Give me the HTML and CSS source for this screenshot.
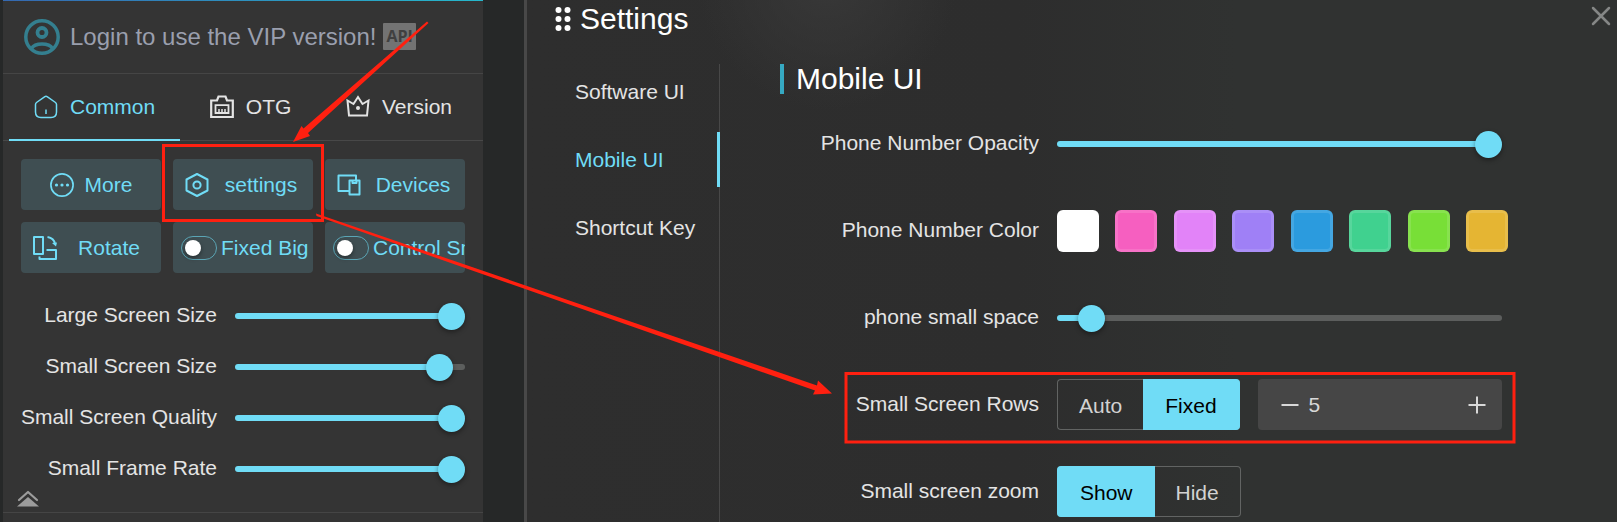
FILE: index.html
```html
<!DOCTYPE html>
<html lang="en">
<head>
<meta charset="utf-8">
<title>Settings</title>
<link rel="stylesheet" href="styles.css">
</head>
<body>
<div class="app">
  <aside class="sidebar">
    <header class="account">
      <svg class="avatar" viewBox="0 0 36 36" fill="none" stroke="currentColor" stroke-width="3.500"><circle cx="18" cy="18" r="16.200"/><circle cx="18" cy="13.500" r="4.500" stroke-width="3.800"/><path d="M7.500 29.500C11 23.500 25 23.500 28.500 29.500"/></svg>
      <a class="login" href="#">Login to use the VIP version!</a>
      <span class="badge">API</span>
    </header>
    <nav class="tabs">
      <button class="tab tab-active"><svg class="icon" viewBox="0 0 24 24" fill="none" stroke="currentColor" stroke-width="1.500"><path d="M2.500 7.500 10.500 1.800q1.500-1 3 0L21.500 7.500q1 .8 1 2V17q0 5.500-5.500 5.500H7q-5.500 0-5.500-5.500V9.500q0-1.200 1-2zM12 14.500v4.500"/></svg>Common</button>
      <button class="tab"><svg class="icon" viewBox="0 0 24 24" fill="none" stroke="currentColor" stroke-width="2.200"><path d="M1.200 5.500H7L8.500 1.500h7L17 5.500h5.800V22H1.200z"/><path d="M5.500 10.200h13V18h-13z" stroke-width="1.800"/><path d="M9 14v3.500M12 14v3.500M15 14v3.500" stroke-width="1.500"/></svg>OTG</button>
      <button class="tab"><svg class="icon" viewBox="0 0 24 24" fill="none" stroke="currentColor" stroke-width="2"><path d="M3 20.500 1.500 5.500 7.500 9 12 2l4.500 7 6-3.500L21 20.500z"/><circle cx="12" cy="13" r="2" fill="currentColor" stroke="none"/></svg>Version</button>
    </nav>
    <section class="tools">
      <button class="tool tool-center"><svg class="icon" viewBox="0 0 24 24" fill="none" stroke="currentColor" stroke-width="1.700"><circle cx="12" cy="12" r="11.100"/><g fill="currentColor" stroke="none"><circle cx="6.500" cy="12" r="1.600"/><circle cx="12" cy="12" r="1.600"/><circle cx="17.500" cy="12" r="1.600"/></g></svg><span>More</span></button>
      <button class="tool"><svg class="icon" viewBox="0 0 24 24" fill="none" stroke="currentColor" stroke-width="2"><path d="M12 1 22.500 6.500v11L12 23 1.500 17.500v-11z" stroke-linejoin="round"/><circle cx="12" cy="12" r="3.600"/></svg><span class="tool-text">settings</span></button>
      <button class="tool"><svg class="icon" viewBox="0 0 24 24" fill="none" stroke="currentColor" stroke-width="2" stroke-linejoin="round"><path d="M12.500 18H1.500V2.500h17.500V7M12.500 7.500h10v14h-10zM15.500 7.500V10h4V7.500"/></svg><span class="tool-text">Devices</span></button>
      <button class="tool"><svg class="icon" viewBox="0 0 24 24" fill="none" stroke="currentColor" stroke-width="2" stroke-linejoin="round"><path d="M1 1H10v17H1zM13.500 14H23v9H6.500v-2.500M14.500 1Q21 2 22 8"/><path d="m19 7 5-.5-1 4z" fill="currentColor" stroke="none"/></svg><span class="tool-text">Rotate</span></button>
      <label class="tool tool-switch"><input class="switch" type="checkbox"><span>Fixed Big</span></label>
      <label class="tool tool-switch"><input class="switch" type="checkbox"><span>Control Small</span></label>
    </section>
    <section class="sliders">
      <label class="label" for="s1">Large Screen Size</label><input class="range" id="s1" type="range" value="100" style="--fill:95%">
      <label class="label" for="s2">Small Screen Size</label><input class="range" id="s2" type="range" value="94" style="--fill:90%">
      <label class="label" for="s3">Small Screen Quality</label><input class="range" id="s3" type="range" value="100" style="--fill:95%">
      <label class="label" for="s4">Small Frame Rate</label><input class="range" id="s4" type="range" value="100" style="--fill:95%">
    </section>
    <button class="collapse" aria-label="Collapse"><svg viewBox="0 0 22 18" width="22" height="18"><path d="M2 10 11 2l9 8" fill="none" stroke="currentColor" stroke-width="2.200" stroke-linecap="round" stroke-linejoin="round"/><path d="M11 7 22 16.500H0z" fill="currentColor"/></svg></button>
    <div class="sidebar-foot"></div>
  </aside>

  <main class="panel">
    <header class="panel-head">
      <svg class="dots" viewBox="0 0 16 26" fill="currentColor"><circle cx="3.500" cy="4" r="3"/><circle cx="12.500" cy="4" r="3"/><circle cx="3.500" cy="13" r="3"/><circle cx="12.500" cy="13" r="3"/><circle cx="3.500" cy="22" r="3"/><circle cx="12.500" cy="22" r="3"/></svg>
      <h1 class="title">Settings</h1>
      <button class="close" aria-label="Close"><svg viewBox="0 0 20 20" width="20" height="20"><path d="M2 2l16 16M18 2 2 18" stroke="currentColor" stroke-width="2.500" stroke-linecap="round"/></svg></button>
    </header>
    <div class="panel-body">
      <nav class="menu">
        <a class="menu-item" href="#">Software UI</a>
        <a class="menu-item menu-active" href="#">Mobile UI</a>
        <a class="menu-item" href="#">Shortcut Key</a>
      </nav>
      <section class="content">
        <h2 class="heading">Mobile UI</h2>
        <div class="rows">
          <label class="label" for="opacity">Phone Number Opacity</label>
          <input class="range" id="opacity" type="range" value="100" style="--fill:98%">
          <span class="label">Phone Number Color</span>
          <div class="swatches">
            <button class="swatch white" aria-label="White"></button>
            <button class="swatch pink" aria-label="Pink"></button>
            <button class="swatch orchid" aria-label="Orchid"></button>
            <button class="swatch purple" aria-label="Purple"></button>
            <button class="swatch blue" aria-label="Blue"></button>
            <button class="swatch green" aria-label="Green"></button>
            <button class="swatch lime" aria-label="Lime"></button>
            <button class="swatch gold" aria-label="Gold"></button>
          </div>
          <label class="label" for="space">phone small space</label>
          <input class="range" id="space" type="range" value="5" style="--fill:7%">
          <label class="label" for="count">Small Screen Rows</label>
          <div class="control">
            <div class="segment"><button class="option">Auto</button><button class="option option-on">Fixed</button></div>
            <div class="stepper">
              <button class="step" aria-label="Decrease"><svg viewBox="0 0 18 18" width="18" height="18"><path d="M0.500 9h17" stroke="currentColor" stroke-width="2"/></svg></button>
              <input class="count" id="count" type="text" value="5">
              <button class="step" aria-label="Increase"><svg viewBox="0 0 18 18" width="18" height="18"><path d="M0.500 9h17M9 .5v17" stroke="currentColor" stroke-width="2"/></svg></button>
            </div>
          </div>
          <span class="label">Small screen zoom</span>
          <div class="control">
            <div class="segment"><button class="option option-on">Show</button><button class="option">Hide</button></div>
          </div>
        </div>
      </section>
    </div>
  </main>
</div>
<svg class="marks" width="1617" height="522" viewBox="0 0 1617 522" fill="none" stroke="#ff2010" stroke-width="3">
  <rect x="163.500" y="145.500" width="159" height="75"/>
  <rect x="846" y="373.500" width="668" height="68.500"/>
  <g fill="#ff2010" stroke="none">
    <path d="M427 21.500 428.500 23 308 133 310 136 293 142 301.500 126 303.500 128.500z"/>
    <path d="M316 213.500 316.500 216 815 390.500 813 394.500 832 393.500 818 380.500 817 385.500z"/>
  </g>
</svg>
</body>
</html>
```
FILE: styles.css
```css
* { box-sizing: border-box; }
body {
  margin: 0;
  background: #262828;
  color: #e4e4e4;
  font: 21px/24px "Liberation Sans", Arial, sans-serif;
  overflow: hidden;
}
button { border: 0; padding: 0; background: none; color: inherit; font: inherit; cursor: pointer; }
a { color: inherit; text-decoration: none; }
svg { display: block; flex: none; }
h1, h2 { margin: 0; font-size: 30px; line-height: 30px; font-weight: 400; color: #fff; }

.app { display: flex; gap: 41px; height: 100vh; padding-left: 3px; }

.sidebar { flex: none; width: 480px; background: #343434; overflow: hidden; }
.account {
  display: flex;
  align-items: center;
  height: 74px;
  padding: 0 0 2px 21px;
  border-top: 1px solid;
  border-image: linear-gradient(90deg, #3568b0, #26b8cc) 1;
  box-shadow: inset 0 -1px #454545;
}
.avatar { width: 36px; height: 36px; color: #347f8f; }
.login { margin-left: 10px; font-size: 24px; color: #9a9fae; }
.badge {
  margin-left: 7px;
  padding: 0 3px;
  background: #737373;
  color: #404040;
  font: bold 16px/27px "Open Sans", sans-serif;
  border-radius: 1px;
}

.tabs { display: flex; justify-content: space-between; padding: 0 6px; box-shadow: inset 0 -1px #484848; }
.tab { display: flex; align-items: center; gap: 12px; height: 67px; padding: 0 25px; border-bottom: 2px solid transparent; }
.tab-active { color: #70dcf6; border-color: #70dcf6; }
.icon { width: 24px; height: 24px; }

.tools { display: grid; grid-template-columns: repeat(3, 1fr); gap: 12px; padding: 18px 18px 17px; }
.tool {
  display: flex;
  align-items: center;
  height: 51px;
  padding-left: 12px;
  border-radius: 4px;
  background: #3f4e52;
  color: #70dcf6;
  white-space: nowrap;
  overflow: hidden;
}
.tool-center { justify-content: center; gap: 11px; padding: 0; }
.tool-text { flex: 1; text-align: center; }
.tool-switch { padding-left: 8px; gap: 4px; }
.switch {
  appearance: none;
  flex: none;
  display: flex;
  align-items: center;
  width: 36px;
  height: 24px;
  margin: 0;
  padding-left: 3px;
  border: 1px solid #5ba5b5;
  border-radius: 12px;
}
.switch::before { content: ""; width: 16px; height: 16px; border-radius: 50%; background: #fff; box-shadow: 0 2px 4px #0006; }

.sliders { display: grid; grid-template-columns: 214px minmax(0, 1fr); column-gap: 18px; padding-right: 18px; grid-auto-rows: 51px; align-items: center; }
.label { padding-bottom: 2px; text-align: right; white-space: nowrap; }
.range { appearance: none; width: 100%; height: 27px; margin: 0; background: none; }
.range::-webkit-slider-runnable-track {
  height: 6px;
  border-radius: 3px;
  background: linear-gradient(90deg, #70dcf6 var(--fill), #5c5e5d var(--fill));
}
.range::-webkit-slider-thumb {
  appearance: none;
  width: 27px;
  height: 27px;
  margin-top: -10px;
  border-radius: 50%;
  background: #70dcf6;
  box-shadow: 0 2px 5px #0006;
}
.collapse { display: block; margin-left: 14px; margin-top: -4px; color: #9c9c9c; height: 18px; }
.sidebar-foot { margin-top: 4px; border-top: 1px solid #454545; }

.panel {
  flex: 1;
  min-width: 0;
  border-left: 3px solid #484848;
  background: radial-gradient(circle at 300px -20px, #383838, #38383800 130px), linear-gradient(90deg, #2e2e2e 0, #2d2d2d 45%, #303231 65%);
}
.panel-head { display: flex; align-items: center; height: 37px; padding: 0 6px 0 28px; }
.dots { width: 16px; height: 26px; color: #fff; }
.title { margin-left: 9px; }
.close { margin-left: auto; height: 26px; color: #858786; }
.close svg { margin-bottom: 6px; }
.panel-body { display: flex; height: calc(100% - 37px); padding-top: 27px; }
.menu { flex: none; display: flex; flex-direction: column; gap: 13px; width: 193px; padding-left: 48px; border-right: 1px solid #484848; }
.menu-item { line-height: 55px; margin-right: -1px; white-space: nowrap; }
.menu-active { color: #70dcf6; border-right: 3px solid #70dcf6; }
.content { flex: 1; min-width: 0; padding-left: 60px; padding-right: 115px; }
.heading { padding-left: 12px; border-left: 4px solid #36a9c2; margin-bottom: 24px; }
.rows { display: grid; grid-template-columns: 259px minmax(0, 1fr); column-gap: 18px; row-gap: 36px; grid-auto-rows: 51px; align-items: center; }
.swatches { display: flex; justify-content: space-between; margin-right: -6px; }
.swatch { width: 42px; height: 42px; border: 3px solid #ffffff1f; border-radius: 6px; }
.white { background: #fff; }
.pink { background: #f65fc0; }
.orchid { background: #e283f8; }
.purple { background: #9f80f6; }
.blue { background: #2b9bde; }
.green { background: #40d18f; }
.lime { background: #78df37; }
.gold { background: #e5b533; }
.control { display: flex; gap: 18px; }
.segment { display: flex; flex: none; }
.option { height: 51px; padding: 2px 21px 0; border: 1px solid #626463; border-radius: 4px; color: #d2d2d2; }
.option:first-child { border-right: 0; border-radius: 4px 0 0 4px; }
.option:last-child { border-left: 0; border-radius: 0 4px 4px 0; }
.option-on { padding: 2px 22px 0; border-color: #70dcf6; background: #70dcf6; color: #000; }
.stepper { display: flex; align-items: center; flex: 1; min-width: 0; height: 51px; padding: 0 16px 0 23px; border-radius: 4px; background: #464646; color: #d8d8d8; }
.count { flex: 1; min-width: 0; height: 27px; margin: 0; padding: 0 0 0 10px; border: 0; background: none; color: inherit; font: inherit; outline: 0; }

.marks { position: absolute; left: 0; top: 0; pointer-events: none; }
```
